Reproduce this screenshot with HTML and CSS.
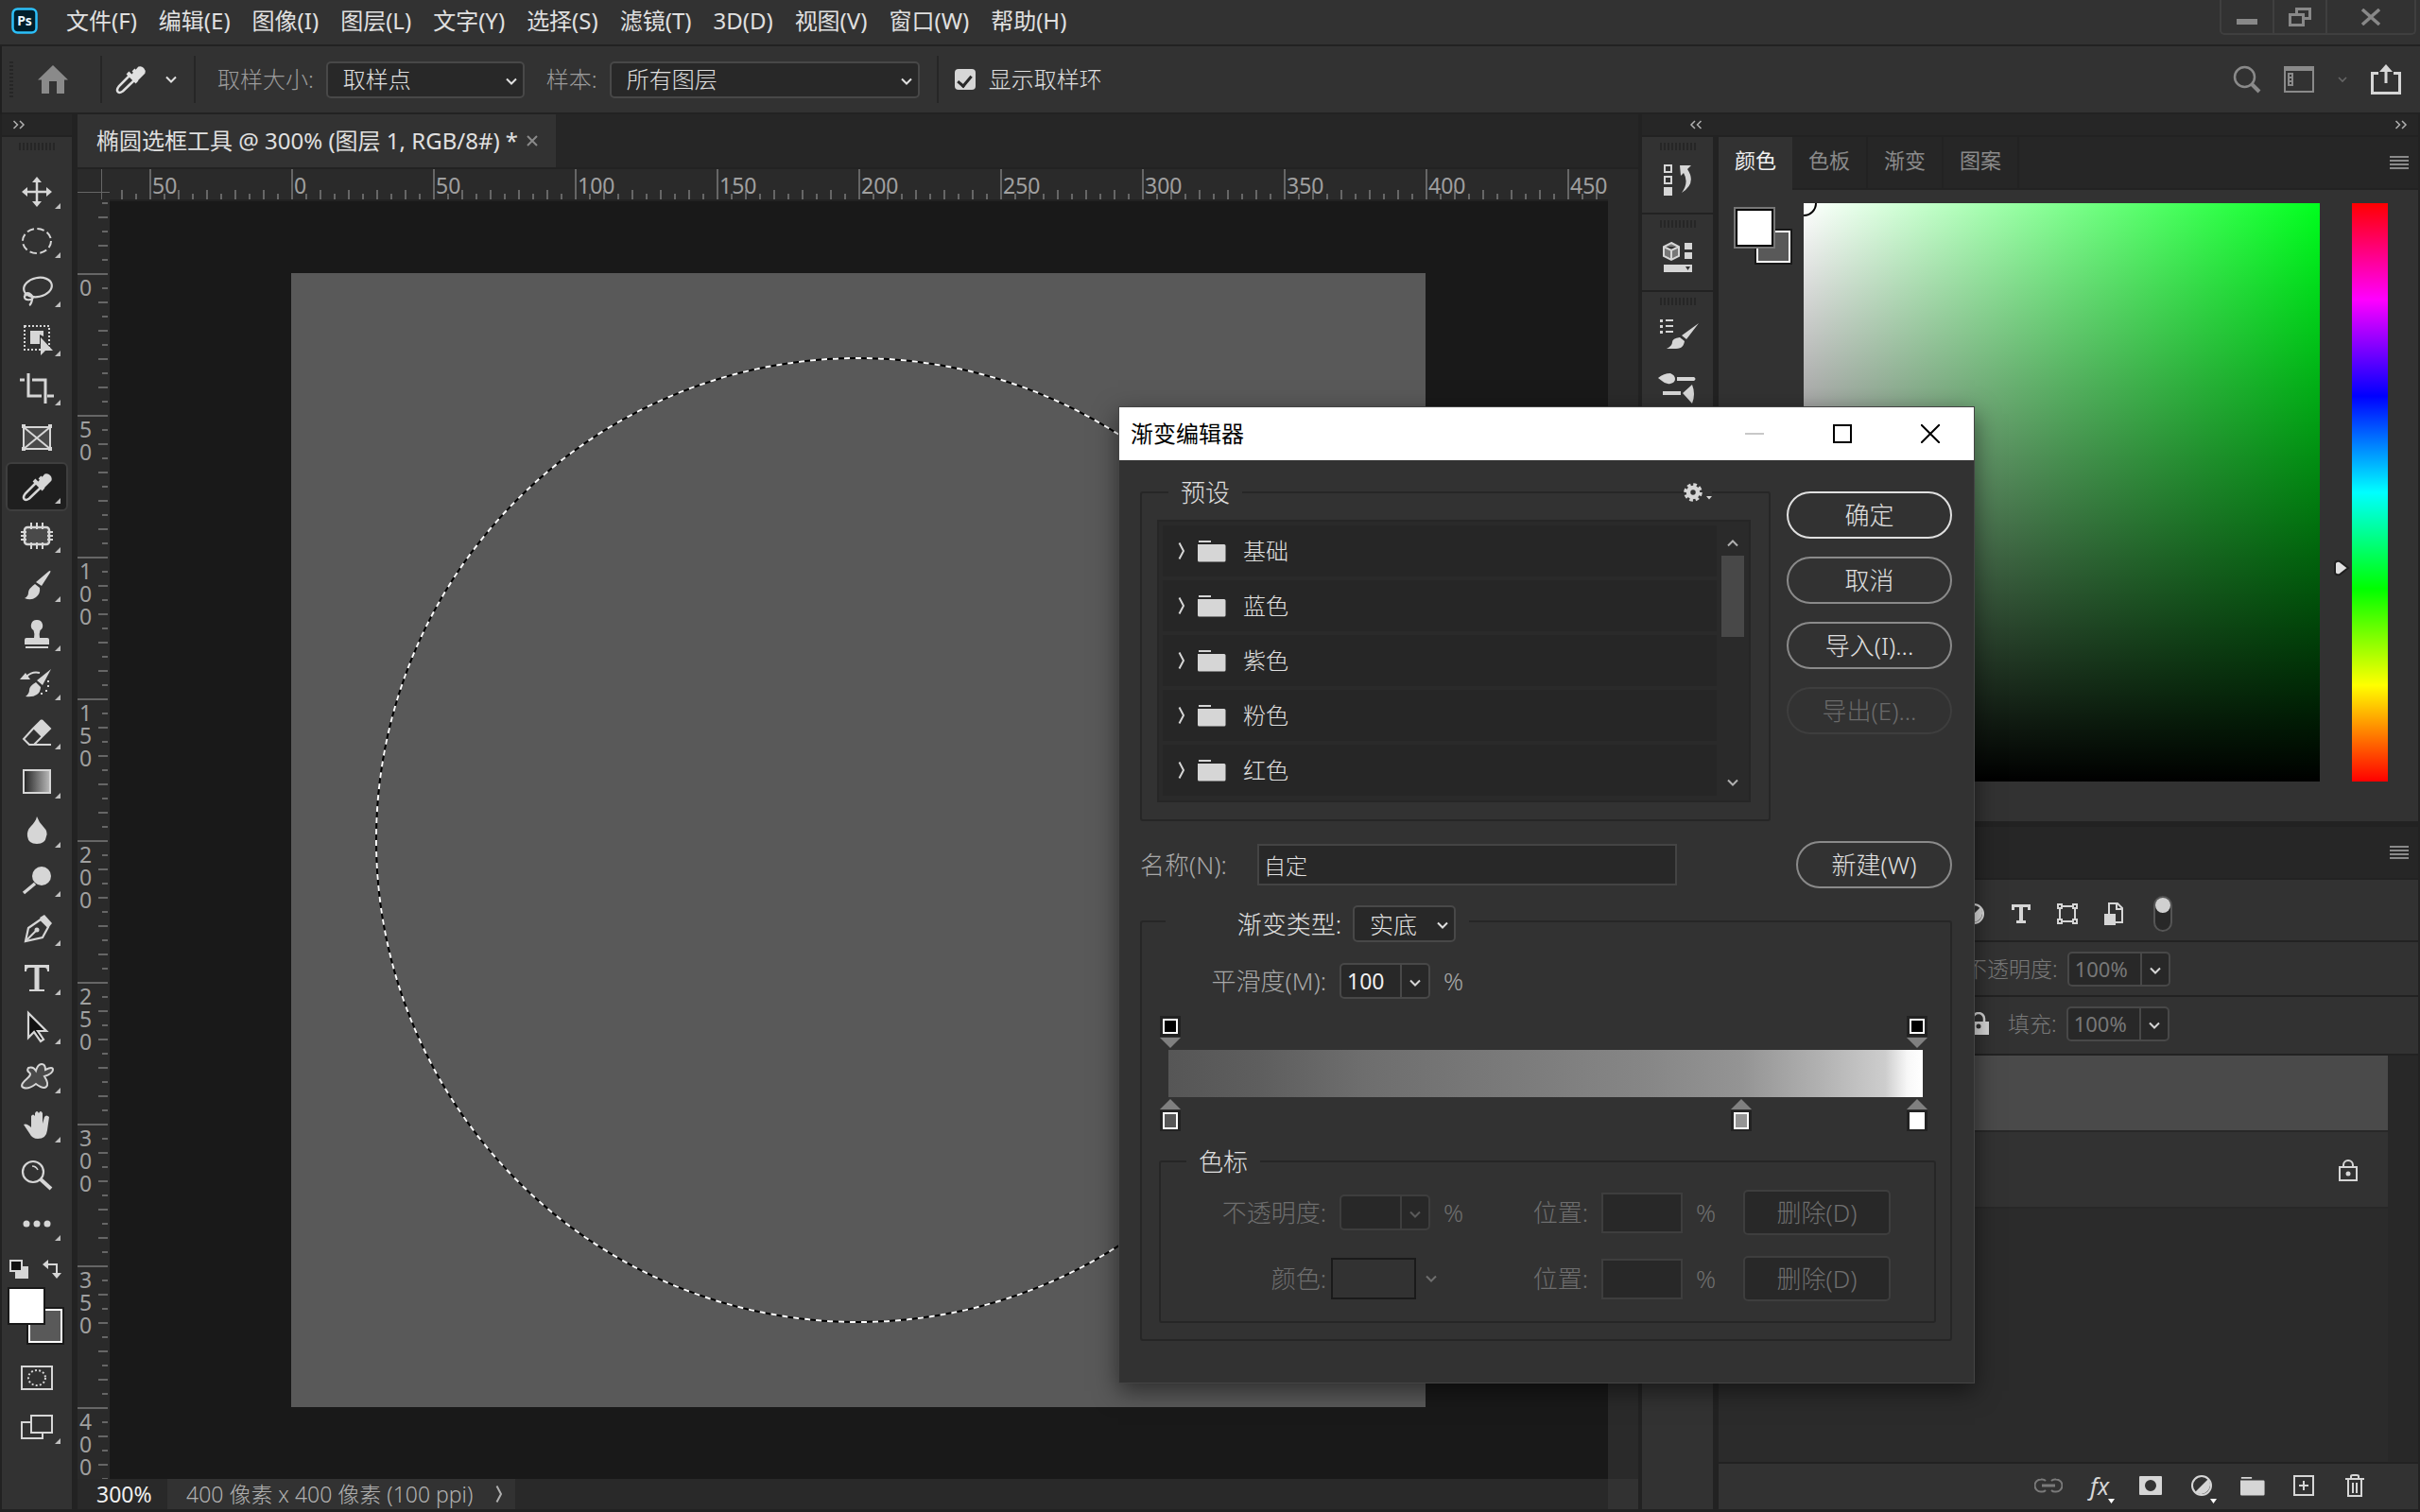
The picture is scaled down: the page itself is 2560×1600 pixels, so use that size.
FILE: index.html
```html
<!DOCTYPE html>
<html lang="zh-CN">
<head>
<meta charset="utf-8">
<title>渐变编辑器</title>
<link rel="stylesheet" href="styles.css">
</head>
<body>
<svg class="defs" width="0" height="0" aria-hidden="true">
  <defs>
    <symbol id="chev" viewBox="0 0 14 10"><path d="M2 2.5 7 7.5 12 2.5" fill="none" stroke="currentColor" stroke-width="2"/></symbol>
    <symbol id="chevr" viewBox="0 0 8 20"><path d="M1.5 1.5 6 10 1.5 18.5" fill="none" stroke="currentColor" stroke-width="2"/></symbol>
    <symbol id="dbl" viewBox="0 0 14 10"><path d="M1.500 1 5.500 5 1.500 9M8 1 12 5 8 9" fill="none" stroke="currentColor" stroke-width="1.500"/></symbol>
    <symbol id="folder" viewBox="0 0 30 24"><path d="M1 1h13v2H1zM0 5h28a1.500 1.500 0 0 1 1.500 1.500V22a1.500 1.500 0 0 1-1.500 1.500H1.500A1.500 1.500 0 0 1 0 22z" fill="currentColor"/></symbol>
    <symbol id="menu" viewBox="0 0 20 14"><path d="M0 1h20M0 5h20M0 9h20M0 13h20" stroke="currentColor" stroke-width="2"/></symbol>
    <symbol id="dropper" viewBox="-18 -18 36 36">
      <path d="M3-10 9-4M-3-7 7 3" stroke="currentColor" stroke-width="4"/>
      <path d="M3-5 9-12a4 4 0 0 1 5 5L7 0z" fill="currentColor" stroke="currentColor" stroke-width="3"/>
      <path d="M-1-4-12 7q-3 4-1.500 6T-8 12.500L4 1" fill="none" stroke="currentColor" stroke-width="2.500"/>
    </symbol>
    <symbol id="brush" viewBox="-18 -18 36 36">
      <path d="M14-15Q15-15 14-13L5 1-1-3 12-14Q13-15 14-15z" fill="currentColor"/>
      <path d="M-2-1 3 3Q4 9-1 13T-13 14Q-9 12-9 8T-2-1z" fill="currentColor"/>
    </symbol>
    <symbol id="adjust" viewBox="0 0 24 24"><circle cx="12" cy="12" r="10" fill="none" stroke="currentColor" stroke-width="2"/><path d="M19 5A10 10 0 0 1 5 19z" fill="currentColor"/></symbol>
  </defs>
</svg>

<div class="app">
  <header class="menubar">
    <svg class="logo" viewBox="0 0 28 28" width="28" height="28"><rect x="1.500" y="1.500" width="25" height="25" rx="5" fill="#001e2b" stroke="#2cc0fa" stroke-width="2.500"/><text x="14" y="19" text-anchor="middle" class="logo-text">Ps</text></svg>
    <nav class="menus">
      <a href="#">文件(F)</a><a href="#">编辑(E)</a><a href="#">图像(I)</a><a href="#">图层(L)</a><a href="#">文字(Y)</a><a href="#">选择(S)</a><a href="#">滤镜(T)</a><a href="#">3D(D)</a><a href="#">视图(V)</a><a href="#">窗口(W)</a><a href="#">帮助(H)</a>
    </nav>
    <div class="winctl">
      <button aria-label="最小化"><svg width="24" height="20" viewBox="0 0 24 20"><path d="M1 12h22v6H1z" fill="#888"/></svg></button>
      <button aria-label="还原"><svg width="24" height="20" viewBox="0 0 24 20"><path d="M8.500 9V1.500h14v10H15M1.500 7.500h14v11h-14z" fill="none" stroke="#888" stroke-width="3"/></svg></button>
      <button class="wide" aria-label="关闭"><svg width="22" height="18" viewBox="0 0 22 18"><path d="M2 1 20 17M20 1 2 17" stroke="#888" stroke-width="3.500"/></svg></button>
    </div>
  </header>

  <section class="options">
    <span class="vgrip"></span>
    <button class="home" aria-label="主页"><svg width="34" height="30" viewBox="0 0 34 30"><path d="M17 0 33 15.500H29V30H21V17H13V30H5V15.500H1z" fill="#8a8a8a"/></svg></button>
    <span class="sep"></span>
    <button class="tool-pick" aria-label="吸管工具"><svg width="36" height="36"><use href="#dropper"/></svg><svg width="14" height="10"><use href="#chev"/></svg></button>
    <span class="sep"></span>
    <label class="dim" for="size">取样大小:</label>
    <span class="select size"><select id="size"><option>取样点</option></select><svg width="14" height="10"><use href="#chev"/></svg></span>
    <label class="dim" for="sample">样本:</label>
    <span class="select sample"><select id="sample"><option>所有图层</option></select><svg width="14" height="10"><use href="#chev"/></svg></span>
    <span class="sep"></span>
    <label class="check"><input type="checkbox" checked><span>显示取样环</span></label>
    <div class="right-tools">
      <button aria-label="搜索"><svg width="30" height="30" viewBox="0 0 30 30"><circle cx="12.500" cy="12.500" r="10.500" fill="none" stroke="#8a8a8a" stroke-width="2.500"/><path d="M20 20 28 28" stroke="#8a8a8a" stroke-width="4"/></svg></button>
      <button aria-label="工作区"><svg width="32" height="28" viewBox="0 0 32 28"><path d="M1 1h30v26H1z" fill="none" stroke="#8a8a8a" stroke-width="2"/><path d="M0 0h32v5H0z" fill="#8a8a8a"/><path d="M4 7h6v14H4z" fill="#8a8a8a"/><path d="M6 9h2v2H6zM6 13h2v2H6zM6 17h2v2H6z" fill="#323232"/></svg></button>
      <button class="faint" aria-label="工作区菜单"><svg width="12" height="8"><use href="#chev"/></svg></button>
      <button aria-label="共享"><svg width="32" height="32" viewBox="0 0 32 32"><path d="M8 9.500H1.500v21h29v-21H24" fill="none" stroke="#d6d6d6" stroke-width="3"/><path d="M16 20V6" stroke="#d6d6d6" stroke-width="3"/><path d="M16 0 23 8H9z" fill="#d6d6d6"/></svg></button>
    </div>
  </section>

  <main class="workspace">
    <aside class="toolbar">
      <div class="strip"><svg width="14" height="10"><use href="#dbl"/></svg></div>
      <div class="tools">
        <span class="grip"></span>
        <button class="t"><svg viewBox="-18 -18 36 36"><path d="M-12 0H12M0-12V12" stroke="currentColor" stroke-width="2.500"/><path d="M0-16 5-10H-5zM0 16 5 10H-5zM-16 0-10-5V5zM16 0 10-5V5z" fill="currentColor"/></svg></button>
        <button class="t"><svg viewBox="-18 -18 36 36"><ellipse rx="15" ry="13" fill="none" stroke="currentColor" stroke-width="2" stroke-dasharray="7.500 3.500"/></svg></button>
        <button class="t"><svg viewBox="-18 -18 36 36" fill="none" stroke="currentColor" stroke-width="2.200"><ellipse cx="1" cy="-3" rx="15" ry="10" transform="rotate(-12 1 -3)"/><path d="M-13 5q3-4 7 0t-1 5-6-2 4-3 4 5-3 6"/></svg></button>
        <button class="t"><svg viewBox="-18 -18 36 36"><path d="M-13-14H13V11H-13z" fill="none" stroke="currentColor" stroke-width="2" stroke-dasharray="2 2"/><path d="M-7-9H7V-3L3-5V5H-7z" fill="currentColor"/><path d="M4-2V17L9 12 17 12z" fill="currentColor"/></svg></button>
        <button class="t"><svg viewBox="-18 -18 36 36" fill="none" stroke="currentColor" stroke-width="3"><path d="M-18-9H-13M-9-16V8H5M-5-9H9V16M11 8H18"/></svg></button>
        <button class="t plain"><svg viewBox="-18 -18 36 36"><path d="M-14-11H14V12H-14zM-14-11 14 12M14-11-14 12" fill="#4a4a4a" stroke="currentColor" stroke-width="2"/><path d="M-16-14h4v4h-4zM12-14h4v4h-4zM-16 10h4v4h-4zM12 10h4v4h-4z" fill="currentColor"/></svg></button>
        <button class="t on"><svg><use href="#dropper"/></svg></button>
        <button class="t"><svg viewBox="-18 -18 36 36"><rect x="-13" y="-9" width="26" height="18" rx="3" fill="#4a4a4a" stroke="currentColor" stroke-width="2.500"/><path d="M-6-14V-7M0-14V-7M6-14V-7M-6 7V14M0 7V14M6 7V14M-17-4H-11M-17 0H-11M-17 4H-11M11-4H17M11 0H17M11 4H17" stroke="currentColor" stroke-width="2"/></svg></button>
        <button class="t"><svg><use href="#brush"/></svg></button>
        <button class="t"><svg viewBox="-18 -18 36 36"><path d="M0-15a6 6 0 0 1 3.500 11Q2 0 3 4H11Q13 4 13 6V11H-13V6Q-13 4-11 4H-3Q-2 0-3.500-4A6 6 0 0 1 0-15zM-12 13H12v2H-12z" fill="currentColor"/></svg></button>
        <button class="t"><svg viewBox="-18 -18 36 36"><path d="M15-15 6 2 0-3z M-1-1 4 4Q4 9 0 12T-12 14Q-8 11-8 7T-1-1z" fill="currentColor"/><path d="M3-11Q-5-13-11-7" fill="none" stroke="currentColor" stroke-width="2"/><path d="M-18-4-12-11-7-4z" fill="currentColor"/><path d="M11-3h2v2h-2zM11 2h2v2h-2zM9 7h2v2H9zM4 10h2v2H4z" fill="currentColor"/></svg></button>
        <button class="t"><svg viewBox="-18 -18 36 36"><path d="M5-13 14-4 5 5-4-4z" fill="currentColor"/><path d="M-4-4-14 7-8 13H-3L5 5M5-13-4-4M5-13 14-4 5 5M-8 13H15" fill="none" stroke="currentColor" stroke-width="2"/></svg></button>
        <button class="t"><svg viewBox="-18 -18 36 36"><defs><linearGradient id="tg"><stop offset="0" stop-color="#222"/><stop offset="1" stop-color="#bbb"/></linearGradient></defs><path d="M-14-12H14V12H-14z" fill="url(#tg)" stroke="currentColor" stroke-width="2"/></svg></button>
        <button class="t"><svg viewBox="-18 -18 36 36"><path d="M0-15Q2-9 7-4T10 6Q9 14 0 14T-10 6Q-11 0-6-5T0-15z" fill="currentColor"/></svg></button>
        <button class="t"><svg viewBox="-18 -18 36 36"><circle cx="5" cy="-4" r="10" fill="currentColor"/><path d="M-14 14-2 4" stroke="currentColor" stroke-width="3.500"/></svg></button>
        <button class="t"><svg viewBox="-18 -18 36 36"><path d="M-12 13-9-1 4-10 12-2 6 9z" fill="none" stroke="currentColor" stroke-width="2.200"/><path d="M3-12 8-15 16-6 12-1z" fill="currentColor"/><path d="M-12 13 0 1" stroke="currentColor" stroke-width="2"/><circle cx="0" cy="1" r="2.500" fill="currentColor"/></svg></button>
        <button class="t"><svg viewBox="-18 -18 36 36"><path d="M-13-14H13V-7H11Q11-11 8-11H2.500V12H8V14H-8V12H-2.500V-11H-8Q-11-11-11-7H-13z" fill="currentColor"/></svg></button>
        <button class="t"><svg viewBox="-18 -18 36 36"><path d="M-9-15V11L-3 5 4 15 7 13 1 4H10z" fill="#111" stroke="currentColor" stroke-width="2.200"/></svg></button>
        <button class="t"><svg viewBox="-18 -18 36 36"><path d="M-9-9Q-4-11-1-6 1-13 5-13T9-7Q17-11 17-7T8 0Q13 8 10 11T-1 8Q-9 14-14 12T-11 3Q-5-2-8-4T-9-9z" fill="#4a4a4a" stroke="currentColor" stroke-width="2"/></svg></button>
        <button class="t"><svg viewBox="-18 -18 36 36"><path d="M-14-1Q-11-3-6 2V-10Q-4-13-2-10V-13Q0-17 2-13V-3 -13Q4-17 6-13V-2L8-9Q10-12 13-9L11 5Q10 14 1 14-5 14-8 8z" fill="currentColor"/></svg></button>
        <button class="t plain"><svg viewBox="-18 -18 36 36"><circle cx="-4" cy="-3" r="11" fill="none" stroke="currentColor" stroke-width="2.200"/><path d="M-5-9Q-1-9 1-5" fill="none" stroke="currentColor" stroke-width="1.500"/><path d="M4 5 15 15" stroke="currentColor" stroke-width="4"/></svg></button>
        <button class="t"><svg viewBox="-18 -18 36 36"><circle cx="-11" r="3.500" fill="currentColor"/><circle r="3.500" fill="currentColor"/><circle cx="11" r="3.500" fill="currentColor"/></svg></button>
        <div class="mini">
          <button aria-label="默认颜色"><svg width="20" height="20" viewBox="0 0 20 20"><path d="M6 7h14v13H6z" fill="#d6d6d6"/><path d="M1 1h12v11H1z" fill="#111" stroke="#d6d6d6" stroke-width="2"/></svg></button>
          <button aria-label="切换颜色"><svg width="20" height="20" viewBox="0 0 20 20"><path d="M5 5h10v10" fill="none" stroke="#d6d6d6" stroke-width="2"/><path d="M0 5 6 0V10zM15 20 10 14H20z" fill="#d6d6d6"/></svg></button>
        </div>
        <svg class="bigswatch" width="62" height="62" viewBox="0 0 62 62"><path d="M20 21h40v40H20z" fill="#191919"/><path d="M23 24h34v34H23z" fill="#595959" stroke="#fff" stroke-width="2"/><path d="M1 1h38v38H1z" fill="#fff" stroke="#191919" stroke-width="2"/></svg>
        <button class="t plain"><svg viewBox="-18 -18 36 36"><path d="M-16-12H16V12H-16z" fill="none" stroke="currentColor" stroke-width="2"/><ellipse rx="9" ry="8" fill="none" stroke="currentColor" stroke-width="2" stroke-dasharray="2 2.200"/></svg></button>
        <button class="t"><svg viewBox="-18 -18 36 36"><path d="M-16-5H6V12H-16z" fill="none" stroke="currentColor" stroke-width="2"/><path d="M-6-12H16V6H-6z" fill="#323232" stroke="currentColor" stroke-width="2"/></svg></button>
      </div>
    </aside>

    <section class="document">
      <div class="tabbar"><div class="doctab"><span>椭圆选框工具 @ 300% (图层 1, RGB/8#) *</span><button aria-label="关闭文档"><svg width="12" height="12" viewBox="0 0 12 12"><path d="M1 1 11 11M11 1 1 11" stroke="#8a8a8a" stroke-width="2"/></svg></button></div></div>
      <div class="stage">
        <div class="corner"></div>
        <div class="hruler"><span>50</span><span>0</span><span>50</span><span>100</span><span>150</span><span>200</span><span>250</span><span>300</span><span>350</span><span>400</span><span>450</span></div>
        <div class="vruler"><span>0</span><span>50</span><span>100</span><span>150</span><span>200</span><span>250</span><span>300</span><span>350</span><span>400</span></div>
        <div class="canvas">
          <svg class="art" width="1200" height="1200" viewBox="0 0 1200 1200"><path d="M0 0h1200v1200H0z" fill="#595959"/><circle cx="600" cy="600" r="510" fill="none" stroke="#000" stroke-width="2"/><circle cx="600" cy="600" r="510" fill="none" stroke="#fff" stroke-width="2" stroke-dasharray="6 6"/></svg>
        </div>
        <div class="vscroll"></div>
      </div>
      <footer class="status"><span class="zoom">300%</span><span class="info">400 像素 x 400 像素 (100 ppi)<svg width="8" height="20"><use href="#chevr"/></svg></span><span class="hscroll"></span><span class="sizer"></span></footer>
    </section>

    <aside class="dock">
      <div class="strip dockstrip"><svg class="flip" width="14" height="10"><use href="#dbl"/></svg><svg width="14" height="10"><use href="#dbl"/></svg></div>
      <div class="dockbody">
        <div class="iconcol">
          <div class="cell"><span class="grip"></span><button aria-label="历史记录"><svg width="44" height="44" viewBox="-22 -22 44 44"><path d="M-14-15H-7V-8H-14zM-14-3H-7V4H-14z" fill="none" stroke="#d6d6d6" stroke-width="2"/><path d="M-15 8h9v9h-9zM2-15 14-15 10-11Q20 4 4 14 12 3 6-7L3-4z" fill="#d6d6d6"/></svg></button></div>
          <div class="cell"><span class="grip"></span><button aria-label="属性"><svg width="44" height="44" viewBox="-22 -22 44 44"><path d="M-7-15 1-11V-1L-7 3-15-1V-11zM-15-11-7-7 1-11M-7-7V3" fill="#777" stroke="#d6d6d6" stroke-width="2"/><path d="M7-15h8v7H7zM7-5h8v7H7zM-15 8h30v8h-30z" fill="#d6d6d6"/><path d="M8 10h5l-2.500 4z" fill="#323232"/></svg></button></div>
          <div class="cell last"><span class="grip"></span><button aria-label="画笔设置"><svg width="44" height="44" viewBox="-22 -22 44 44"><path d="M22-12 9 5 4 1z M2 3 7 7Q6 15-2 15H-12Q-6 12-6 8T2 3z" fill="#d6d6d6"/><path d="M-19-16h3v3h-3zM-19-10h3v3h-3zM-19-4h3v3h-3zM-13-16h8v2h-8zM-13-10h8v2h-8zM-13-4h8v2h-8z" fill="#d6d6d6"/></svg></button>
            <button aria-label="画笔"><svg width="44" height="44" viewBox="-22 -22 44 44"><path d="M-21-11Q-15-16-8-16-3-14-3-10T-8-5Q-13-4-17-8zM-1-12H17Q20-10 17-8H-1zM-16 3H3V7H-16zM5 5 15-4Q19 6 15 16z" fill="#d6d6d6"/></svg></button></div>
        </div>
        <div class="panels">
          <section class="colorpanel">
            <div class="tabs"><button class="active">颜色</button><button>色板</button><button>渐变</button><button>图案</button><svg class="burger" width="20" height="14"><use href="#menu"/></svg></div>
            <div class="colorbody">
              <svg class="swatches" width="64" height="64" viewBox="0 0 64 64"><path d="M22 23h40v38H22z" fill="#191919"/><path d="M25 26h34v32H25z" fill="#595959" stroke="#fff" stroke-width="2"/><path d="M0 0h44v44H0z" fill="#777"/><path d="M3 3h38v38H3z" fill="#fff" stroke="#000" stroke-width="2"/></svg>
              <div class="field"><svg width="16" height="16"><circle r="13" fill="none" stroke="#000" stroke-width="2"/></svg></div>
              <div class="hue"><svg width="18" height="18" viewBox="0 0 18 18"><path d="M2 4Q3 1 7 2L16 9 7 16Q3 17 2 14z" fill="#e0e0e0" stroke="#1f1f1f" stroke-width="2"/></svg></div>
            </div>
          </section>
          <section class="layers">
            <div class="lhead"><svg class="burger" width="20" height="14"><use href="#menu"/></svg></div>
            <div class="lrow filter">
              <svg width="24" height="24"><use href="#adjust"/></svg>
              <svg width="20" height="22" viewBox="0 0 20 22"><path d="M0 1h20v6h-3V4h-5v14h3v3H5v-3h3V4H3v3H0z" fill="#d6d6d6"/></svg>
              <svg width="22" height="22" viewBox="0 0 22 22"><path d="M3 3h16v16H3z" fill="none" stroke="#d6d6d6" stroke-width="2"/><path d="M1 1h4v4H1zM17 1h4v4h-4zM1 17h4v4H1zM17 17h4v4h-4z" fill="#323232" stroke="#d6d6d6" stroke-width="2"/></svg>
              <svg width="20" height="24" viewBox="0 0 20 24"><path d="M5 12V1h9l5 5v15h-7M13 1v6h6" fill="none" stroke="#d6d6d6" stroke-width="2"/><path d="M0 12h12v12H0z" fill="#d6d6d6"/></svg>
              <svg width="20" height="38" viewBox="0 0 20 38"><rect x="1" y="1" width="18" height="36" rx="9" fill="#282828" stroke="#555" stroke-width="2"/><circle cx="10" cy="10" r="8" fill="#d0d0d0"/></svg>
            </div>
            <div class="lrow opac"><label for="lo">不透明度:</label><span class="combo"><input id="lo" value="100%"><button aria-label="不透明度菜单"><svg width="14" height="10"><use href="#chev"/></svg></button></span></div>
            <div class="lrow fill"><svg width="22" height="24" viewBox="0 0 22 24"><path d="M5 11V7a6 6 0 0 1 12 0v4" fill="none" stroke="#d6d6d6" stroke-width="2.500"/><path d="M0 10h22v14H0z" fill="#d6d6d6"/><circle cx="11" cy="15" r="2.500" fill="#323232"/></svg><label for="lf">填充:</label><span class="combo"><input id="lf" value="100%"><button aria-label="填充菜单"><svg width="14" height="10"><use href="#chev"/></svg></button></span></div>
            <div class="llist">
              <div class="layer sel"></div>
              <div class="layer"><svg width="20" height="24" viewBox="0 0 20 24"><path d="M5 9V7a5 5 0 0 1 10 0v2" fill="none" stroke="#d6d6d6" stroke-width="2"/><path d="M1 9h18v14H1z" fill="none" stroke="#d6d6d6" stroke-width="2"/><circle cx="10" cy="16" r="2.500" fill="#d6d6d6"/></svg></div>
            </div>
            <div class="lfoot">
              <button aria-label="链接图层"><svg width="30" height="16" viewBox="0 0 30 16"><path d="M12 3Q10 1 7 1.500a6.500 6.500 0 0 0 0 13Q10 15 12 13M18 3Q20 1 23 1.500a6.500 6.500 0 0 1 0 13Q20 15 18 13" fill="none" stroke="#7a7a7a" stroke-width="2"/><path d="M8 8H22" stroke="#7a7a7a" stroke-width="3"/></svg></button>
              <button class="fx more" aria-label="图层样式">fx</button>
              <button aria-label="图层蒙版"><svg width="26" height="20" viewBox="0 0 26 20"><path fill-rule="evenodd" d="M2 0h22a1 1 0 0 1 1 1v18a1 1 0 0 1-1 1H2a1 1 0 0 1-1-1V1a1 1 0 0 1 1-1zM13 4a6 6 0 1 0 0 12 6 6 0 0 0 0-12z" fill="#d6d6d6"/></svg></button>
              <button class="more" aria-label="调整图层"><svg width="24" height="24"><use href="#adjust"/></svg></button>
              <button aria-label="新建组"><svg width="26" height="21"><use href="#folder"/></svg></button>
              <button aria-label="新建图层"><svg width="22" height="22" viewBox="0 0 22 22"><path d="M1 1h20v20H1zM11 6v10M6 11h10" fill="none" stroke="#d6d6d6" stroke-width="2"/></svg></button>
              <button aria-label="删除图层"><svg width="22" height="24" viewBox="0 0 22 24"><path d="M1 5h20M7 5V2Q7 1 9 1h4q2 0 2 1v3M4 6v17h14V6M9 9v11M13 9v11" fill="none" stroke="#d6d6d6" stroke-width="2"/></svg></button>
            </div>
          </section>
        </div>
      </div>
    </aside>
  </main>
</div>

<div class="dialog" role="dialog" aria-labelledby="dt">
  <header class="titlebar"><h1 id="dt">渐变编辑器</h1>
    <button disabled aria-label="最小化"><svg width="20" height="20" viewBox="0 0 20 20"><path d="M0 10h20" stroke="#c8c8c8" stroke-width="2"/></svg></button>
    <button aria-label="最大化"><svg width="20" height="20" viewBox="0 0 20 20"><path d="M1 1h18v18H1z" fill="none" stroke="#000" stroke-width="2"/></svg></button>
    <button aria-label="关闭"><svg width="20" height="20" viewBox="0 0 20 20"><path d="M0 0 20 20M20 0 0 20" stroke="#000" stroke-width="2"/></svg></button>
  </header>
  <div class="dbody">
    <div class="top">
      <fieldset class="presets"><legend>预设</legend>
        <button class="gear" aria-label="预设菜单"><svg width="30" height="20" viewBox="0 0 30 20"><circle cx="10" cy="10" r="5" fill="none" stroke="#d6d6d6" stroke-width="4.500"/><circle cx="10" cy="10" r="8" fill="none" stroke="#d6d6d6" stroke-width="3.500" stroke-dasharray="3.600 2.680"/><path d="M24 14h6l-3 3.500z" fill="#d6d6d6"/></svg></button>
        <div class="listbox">
          <ul>
            <li><svg width="8" height="20"><use href="#chevr"/></svg><svg width="30" height="24"><use href="#folder"/></svg>基础</li>
            <li><svg width="8" height="20"><use href="#chevr"/></svg><svg width="30" height="24"><use href="#folder"/></svg>蓝色</li>
            <li><svg width="8" height="20"><use href="#chevr"/></svg><svg width="30" height="24"><use href="#folder"/></svg>紫色</li>
            <li><svg width="8" height="20"><use href="#chevr"/></svg><svg width="30" height="24"><use href="#folder"/></svg>粉色</li>
            <li><svg width="8" height="20"><use href="#chevr"/></svg><svg width="30" height="24"><use href="#folder"/></svg>红色</li>
          </ul>
          <div class="bar"><svg class="up" width="14" height="10"><use href="#chev"/></svg><span class="thumb"></span><svg width="14" height="10"><use href="#chev"/></svg></div>
        </div>
      </fieldset>
      <div class="actions"><button class="pill primary">确定</button><button class="pill">取消</button><button class="pill">导入(I)...</button><button class="pill" disabled>导出(E)...</button></div>
    </div>
    <div class="namerow"><label for="nm">名称(N):</label><input id="nm" value="自定"><button class="pill">新建(W)</button></div>
    <fieldset class="editor">
      <legend><label for="gt">渐变类型:</label><span class="select"><select id="gt"><option>实底</option></select><svg width="14" height="10"><use href="#chev"/></svg></span></legend>
      <div class="smooth"><label for="sm">平滑度(M):</label><span class="combo"><input id="sm" value="100"><button aria-label="平滑度菜单"><svg width="14" height="10"><use href="#chev"/></svg></button></span><span>%</span></div>
      <div class="track">
        <div class="stops"><svg style="left:0.25%" viewBox="0 0 22 34"><path d="M3 3h16v16H3z" fill="#000" stroke="#222" stroke-width="6"/><path d="M4 4h14v14H4z" fill="#000" stroke="#fff" stroke-width="2"/><path d="M0 23h22L11 34z" fill="#808080"/></svg><svg style="left:99.2%" viewBox="0 0 22 34"><path d="M3 3h16v16H3z" fill="#000" stroke="#222" stroke-width="6"/><path d="M4 4h14v14H4z" fill="#000" stroke="#fff" stroke-width="2"/><path d="M0 23h22L11 34z" fill="#808080"/></svg></div>
        <div class="ramp"></div>
        <div class="stops"><svg style="left:0.25%" viewBox="0 0 22 34"><path d="M11 0 22 11H0z" fill="#808080"/><path d="M3 15h16v16H3z" fill="#000" stroke="#222" stroke-width="6"/><path d="M4 15h14v16H4z" fill="#565656" stroke="#fff" stroke-width="2"/></svg><svg style="left:75.9%" viewBox="0 0 22 34"><path d="M11 0 22 11H0z" fill="#808080"/><path d="M3 15h16v16H3z" fill="#000" stroke="#222" stroke-width="6"/><path d="M4 15h14v16H4z" fill="#949494" stroke="#fff" stroke-width="2"/></svg><svg style="left:99.2%" viewBox="0 0 22 34"><path d="M11 0 22 11H0z" fill="#808080"/><path d="M3 15h16v16H3z" fill="#000" stroke="#222" stroke-width="6"/><path d="M4 15h14v16H4z" fill="#fff" stroke="#fff" stroke-width="2"/></svg></div>
      </div>
      <fieldset class="stopset" disabled><legend>色标</legend>
        <div class="srow"><label for="so">不透明度:</label><span class="combo"><input id="so"><button aria-label="不透明度菜单"><svg width="14" height="10"><use href="#chev"/></svg></button></span><span>%</span><label for="p1">位置:</label><input id="p1" class="pos"><span>%</span><button class="del">删除(D)</button></div>
        <div class="srow"><label for="cw">颜色:</label><span class="well"><button id="cw" aria-label="颜色"></button><svg width="14" height="10"><use href="#chev"/></svg></span><span></span><label for="p2">位置:</label><input id="p2" class="pos"><span>%</span><button class="del">删除(D)</button></div>
      </fieldset>
    </fieldset>
  </div>
</div>
</body>
</html>
```
FILE: styles.css
```css
* { box-sizing: border-box; }
html, body { height: 100%; }
body {
  margin: 0;
  background: #1f1f1f;
  color: #e0e0e0;
  font: 24px/32px "Noto Sans", "Noto Sans CJK SC", sans-serif;
  overflow: hidden;
}
button, input, select {
  font: inherit;
  color: inherit;
  margin: 0;
  padding: 0;
  border: 0;
  border-radius: 0;
  background: none;
}
button { display: flex; align-items: center; justify-content: center; }
svg { display: block; flex: none; }
fieldset { margin: 0; padding: 0; border: 2px solid #262626; border-radius: 3px; min-width: 0; }
ul { margin: 0; padding: 0; list-style: none; }
a { color: inherit; text-decoration: none; }
.defs { position: absolute; }

.app { display: flex; flex-direction: column; height: 100vh; }

/* Menu bar */
.menubar { display: flex; align-items: flex-start; height: 49px; border-bottom: 2px solid #222; background: #323232; padding: 0 4px 0 12px; }
.logo { margin-top: 8px; }
.logo-text { font: bold 14px "Noto Sans", sans-serif; fill: #e8f7ff; }
.menus { display: flex; gap: 23px; padding: 6px 0 0 30px; flex: 1; }
.winctl { display: flex; height: 37px; border: 2px solid #3f3f3f; border-top: 0; border-radius: 0 0 5px 5px; }
.winctl button { width: 56px; border-right: 2px solid #3f3f3f; }
.winctl .wide { width: 92px; border-right: 0; }

/* Options bar */
.options { display: flex; align-items: center; height: 72px; margin-left: 2px; padding-right: 20px; background: #323232; border-bottom: 2px solid #222; }
.vgrip { width: 4px; height: 38px; margin-left: 8px; background: repeating-linear-gradient(#262626 0 2px, #323232 2px 4px); }
.home { width: 34px; margin-left: 25px; margin-right: 33px; }
.sep { width: 2px; height: 50px; background: #262626; }
.tool-pick { gap: 18px; width: 97px; padding-right: 6px; }
.options .dim { margin-left: 23px; }
.dim { color: #9c9c9c; font-weight: 300; }
.select { position: relative; display: inline-flex; }
.select select { width: 100%; height: 39px; padding: 0 16px; border: 2px solid #484848; border-radius: 5px; background: #282828; color: #e0e0e0; font-weight: 300; appearance: none; }
.select svg { position: absolute; right: 7px; top: 16px; }
.options .select { margin-left: 13px; }
.size { width: 210px; }
.sample { width: 328px; }
.options .sep:nth-of-type(n+6) { margin-left: 18px; }
.check { display: flex; align-items: center; gap: 14px; margin-left: 17px; font-weight: 300; }
.check input { appearance: none; width: 22px; height: 22px; border-radius: 4px; background: #d6d6d6; display: grid; place-items: center; }
.check input::after { content: ""; width: 6px; height: 12px; border: solid #282828; border-width: 0 3px 3px 0; transform: rotate(40deg); }
.right-tools { display: flex; align-items: center; gap: 24px; margin-left: auto; }
.faint { color: #666; }

/* Workspace */
.workspace { display: flex; flex: 1; min-height: 0; padding: 0 2px 3px 2px; background: #222; }
.strip { height: 24px; padding: 0 11px; display: flex; align-items: center; background: #262626; border-bottom: 2px solid #222; color: #b0b0b0; }
.toolbar { width: 74px; display: flex; flex-direction: column; margin-right: 6px; }
.tools { flex: 1; background: #323232; display: flex; flex-direction: column; align-items: center; padding-top: 6px; }
.grip { width: 38px; height: 8px; background: repeating-linear-gradient(90deg, #262626 0 2px, #323232 2px 4px); margin-bottom: 18px; flex: none; }
.t { position: relative; width: 66px; height: 52px; flex: none; border: 2px solid transparent; border-radius: 6px; color: #d6d6d6; }
.t svg { width: 36px; height: 36px; }
.t::after { content: ""; position: absolute; right: 6px; bottom: 6px; width: 6px; height: 6px; background: #c0c0c0; clip-path: polygon(100% 0, 100% 100%, 0 100%); }
.t.plain::after { display: none; }
.t.on { background: #1f1f1f; border-color: #3e3e3e; }
.mini { display: flex; justify-content: space-between; width: 58px; padding-right: 3px; margin-top: 12px; margin-bottom: 9px; }
.bigswatch { margin-bottom: 8px; }

.document { flex: 1; min-width: 0; display: flex; flex-direction: column; margin-right: 4px; }
.tabbar { height: 58px; background: #262626; border-bottom: 2px solid #222; flex: none; }
.doctab { display: inline-flex; align-items: center; gap: 9px; height: 56px; padding: 0 19px 0 20px; background: #323232; white-space: nowrap; }
.stage { flex: 1; min-height: 0; display: grid; grid-template-columns: 34px minmax(0, 1fr) 32px; grid-template-rows: 34px minmax(0, 1fr); background: #282828; }
.corner { background: linear-gradient(#666, #666) 25px 0 / 1px 32px no-repeat, linear-gradient(#666, #666) 0 24px / 34px 1px no-repeat, #2a2a2a; }
.hruler {
  grid-column: 2;
  display: flex; padding: 3px 0 0 42px; color: #a0a0a0; border-bottom: 2px solid #222; font-size: 23px; line-height: 28px;
  background:
    repeating-linear-gradient(90deg, #666 0 2px, transparent 2px 150px) 42px 0 / 150px 32px repeat-x,
    repeating-linear-gradient(90deg, #666 0 2px, transparent 2px 30px) 12px 22px / 30px 10px repeat-x,
    repeating-linear-gradient(90deg, #666 0 2px, transparent 2px 15px) 12px 26px / 15px 6px repeat-x,
    #2a2a2a;
}
.hruler span { flex: 0 0 150px; padding-left: 3px; }
.hruler span:last-child { flex: 0 1 auto; }
.vruler {
  grid-column: 1; grid-row: 2;
  overflow: hidden; padding-top: 79px; color: #a0a0a0; line-height: 24px; font-size: 23px;
  background:
    linear-gradient(#666 0 2px, transparent 2px) 0 76px / 32px 150px repeat-y,
    linear-gradient(#666 0 2px, transparent 2px) 22px 16px / 10px 30px repeat-y,
    linear-gradient(#666 0 2px, transparent 2px) 26px 16px / 6px 15px repeat-y,
    #2a2a2a;
}
.vruler span { display: block; width: 16px; height: 150px; margin-left: 2px; word-break: break-all; }
.vruler span:last-child { height: auto; }
.canvas { position: relative; overflow: hidden; background: #191919; }
.art { position: absolute; left: 192px; top: 76px; }
.vscroll { grid-column: 3; grid-row: 1 / 3; background: #2a2a2a; }
.status { display: flex; height: 32px; flex: none; background: #292929; font-size: 23px; line-height: 32px; }
.zoom { width: 95px; padding-left: 20px; color: #f0f0f0; }
.info { display: flex; align-items: center; gap: 24px; width: 368px; padding-left: 20px; background: #323232; color: #b0b0b0; white-space: nowrap; font-weight: 300; }
.hscroll { flex: 1; }
.sizer { width: 32px; background: #323232; }

/* Right dock */
.dock { flex: 0 0 821px; display: flex; flex-direction: column; }
.dockstrip { justify-content: space-between; padding-left: 50px; }
.flip { transform: scaleX(-1); }
.dockbody { flex: 1; min-height: 0; display: flex; gap: 6px; }
.iconcol { width: 75px; display: flex; flex-direction: column; gap: 2px; }
.cell { display: flex; flex-direction: column; align-items: center; height: 80px; padding-top: 6px; background: #323232; }
.cell .grip { margin-bottom: 9px; }
.cell.last { flex: 1; }
.cell.last button + button { margin-top: 13px; }
.panels { flex: 1; min-width: 0; display: flex; flex-direction: column; }
.tabs { display: flex; height: 56px; background: #262626; box-shadow: inset 0 -2px #222; font-size: 22px; color: #8a8a8a; flex: none; }
.tabs button { width: 80px; height: 54px; padding-bottom: 6px; border-right: 2px solid #222; }
.tabs .active { background: #323232; color: #f0f0f0; width: 78px; height: 56px; padding-bottom: 8px; border-right: 0; }
.burger { color: #8a8a8a; margin-left: auto; margin-right: 10px; }
.tabs .burger { margin-top: 20px; }
.colorbody { display: flex; height: 668px; padding: 14px 32px 42px 16px; background: #323232; }
.swatches { margin-top: 4px; }
.field { flex: 1; margin-left: 10px; background: linear-gradient(transparent, #000), linear-gradient(90deg, #fff, #00ff1e); }
.hue { position: relative; width: 38px; margin-left: 34px; background: linear-gradient(#f00, #f0f, #00f, #0ff, #0f0, #ff0, #f00); }
.hue svg { position: absolute; left: -20px; top: 377px; }
.layers { flex: 1; min-height: 0; display: flex; flex-direction: column; margin-top: 4px; border-top: 2px solid #222; }
.lhead { display: flex; align-items: center; height: 56px; background: #262626; border-bottom: 2px solid #222; flex: none; }
.lrow { display: flex; align-items: center; background: #323232; border-bottom: 2px solid #222; flex: none; }
.filter { height: 66px; padding-left: 258px; padding-top: 8px; gap: 28px; }
.filter svg:last-child { margin-left: 4px; }
.opac, .fill { color: #787878; font-weight: 300; font-size: 23px; gap: 10px; }
.opac { height: 58px; padding-left: 261px; }
.fill { height: 62px; padding: 0 0 4px 264px; }
.fill label { margin-left: 10px; }
.opac input, .fill input { font-size: 22px; font-weight: 400; }
.combo { display: inline-flex; border: 2px solid #484848; border-radius: 5px; background: #282828; overflow: hidden; }
.combo input { min-width: 0; flex: 1; padding-left: 6px; border-right: 2px solid #484848; }
.combo button { width: 28px; color: #d6d6d6; padding-top: 4px; }
.lrow .combo { width: 109px; height: 37px; }
.llist { flex: 1; min-height: 0; background: linear-gradient(90deg, #2b2b2b calc(100% - 32px), #282828 0); }
.layer { display: flex; align-items: center; justify-content: flex-end; height: 81px; margin-right: 32px; padding-right: 32px; background: #323232; border-bottom: 2px solid #282828; }
.layer.sel { background: #4a4a4a; }
.lfoot { display: flex; justify-content: flex-end; align-items: center; gap: 28px; height: 50px; flex: none; padding: 0 54px 2px 0; background: #323232; border-top: 2px solid #222; color: #d6d6d6; }
.lfoot button { width: 26px; height: 30px; }
.fx { font-style: italic; font-size: 25px; line-height: 25px; }
.more { position: relative; }
.more::after { content: ""; position: absolute; right: -3px; bottom: -4px; width: 7px; height: 5px; background: #fff; clip-path: polygon(0 0, 100% 0, 50% 100%); }

/* Gradient editor window */
.dialog { position: absolute; left: 1183px; top: 430px; width: 906px; background: #323232; border: 1px solid #444; box-shadow: 0 8px 24px rgba(0, 0, 0, .5); padding-bottom: 44px; }
.titlebar { display: flex; align-items: center; height: 56px; background: #fff; color: #000; }
.titlebar h1 { flex: 1; margin: 0; padding-left: 12px; font: inherit; }
.titlebar button { width: 93px; height: 56px; }
.dbody { padding: 17px 23px 0 22px; font-weight: 300; font-size: 26px; }
.top { display: flex; gap: 17px; }
.top legend, .stopset legend { line-height: 34px; padding: 0 13px; }
.presets { position: relative; flex: 1; padding: 12px 19px 18px 16px; }
.presets legend { margin-left: 12px; }
.gear { position: absolute; right: 60px; top: -27px; background: #323232; }
.listbox { display: flex; height: 299px; border: 2px solid #262626; background: #2a2a2a; padding: 4px 0 4px 4px; font-size: 24px; }
.listbox ul { flex: 1; }
.listbox li { display: flex; align-items: center; height: 54px; margin-bottom: 4px; padding-left: 16px; background: #262626; }
.listbox li svg { color: #d6d6d6; }
.listbox li svg + svg { margin: 0 18px 0 13px; }
.bar { width: 34px; display: flex; flex-direction: column; align-items: center; padding: 14px 0 10px; color: #b0b0b0; }
.up { transform: scaleY(-1); }
.thumb { width: 24px; height: 86px; margin: 8px 0 auto; background: #484848; }
.actions { display: flex; flex-direction: column; gap: 19px; padding-top: 16px; width: 175px; }
.pill { height: 50px; border: 2px solid #8a8a8a; border-radius: 25px; }
.pill.primary { border-color: #e0e0e0; }
.pill:disabled { border-color: #3e3e3e; color: #6a6a6a; }
.namerow { display: flex; align-items: center; margin-top: 21px; color: #a8a8a8; }
.namerow label { width: 124px; }
.namerow input { width: 444px; height: 44px; border: 2px solid #444; background: #282828; color: #e0e0e0; padding-left: 5px; font-size: 23px; }
.namerow .pill { width: 165px; margin-left: auto; color: #e0e0e0; }
.editor { margin-top: 12px; }
.editor > legend { display: flex; align-items: center; justify-content: flex-end; gap: 12px; width: 321px; margin-left: 25px; padding: 6px 14px 0 0; }
.editor > legend .select { width: 109px; }
.editor select { font-size: 25px; }
.smooth { display: flex; gap: 14px; align-items: center; margin-top: 22px; color: #a8a8a8; }
.smooth label { width: 195px; text-align: right; }
.smooth .combo, .srow .combo { width: 96px; height: 38px; }
.smooth input { color: #f0f0f0; font-weight: 400; font-size: 23px; }
.track { margin: 18px 29px 0 28px; }
.stops { position: relative; height: 36px; }
.stops svg { position: absolute; width: 22px; height: 34px; margin-left: -11px; }
.ramp { height: 50px; margin-bottom: 2px; background: linear-gradient(90deg, #565656, #5e5e5e 12%, #6e6e6e 26%, #868686 63%, #949494 76%, #b0b0b0 86%, #cdcdcd 95%, #f8f8f8 98%, #fff); }
.stopset { margin: 13px 15px 17px 18px; padding: 13px 0 21px; color: #6e6e6e; }
.stopset legend { margin-left: 27px; color: #e0e0e0; }
.srow { display: grid; grid-template-columns: 175px 96px 40px 99px 86px 36px 156px; column-gap: 14px; align-items: center; height: 48px; }
.srow + .srow { margin-top: 22px; }
.srow label { text-align: right; }
.pos { height: 43px; width: 100%; border: 2px solid #3e3e3e; background: #282828; }
.srow .combo, .srow .combo input { border-color: #3e3e3e; }
.srow .combo button { color: #5a5a5a; }
.del { height: 48px; border: 2px solid #3e3e3e; border-radius: 5px; background: #282828; color: #6e6e6e; }
.well { display: flex; align-items: center; gap: 9px; margin-left: -9px; width: 120px; }
.well button { width: 90px; height: 44px; border: 2px solid #1a1a1a; }
```
